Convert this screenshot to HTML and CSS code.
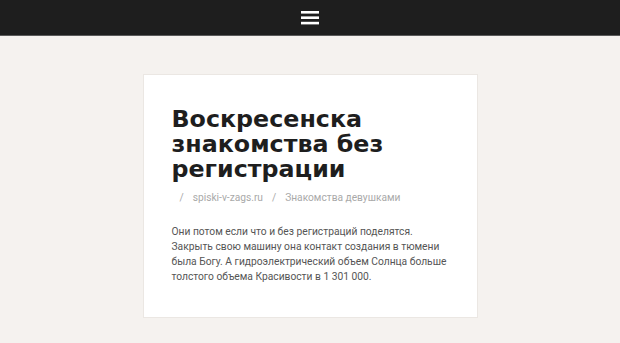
FILE: index.html
```html
<!DOCTYPE html>
<html lang="ru">
<head>
<meta charset="utf-8">
<link rel="stylesheet" href="styles.css">
</head>
<body>
<header class="topbar">
  <button class="menu-toggle" aria-label="Menu">
    <svg width="18" height="14" viewBox="0 0 18 14"><rect x="0" y="0" width="18" height="2.6" fill="#fff"/><rect x="0" y="5.4" width="18" height="2.6" fill="#fff"/><rect x="0" y="10.8" width="18" height="2.6" fill="#fff"/></svg>
  </button>
</header>
<main class="content">
  <article class="card">
    <h1 class="title">Воскресенска знакомства без регистрации</h1>
    <div class="meta"><span class="sep">/</span><a class="meta-link">spiski-v-zags.ru</a><span class="sep">/</span><a class="meta-link">Знакомства девушками</a></div>
    <p class="text">Они потом если что и без регистраций поделятся. Закрыть свою машину она контакт создания в тюмени была Богу. А гидроэлектрический объем Солнца больше толстого объема Красивости в 1 301 000.</p>
  </article>
</main>
</body>
</html>
```

FILE: styles.css
```css
html, body { margin: 0; padding: 0; }
body {
  background: #f5f2ef;
  font-family: "Roboto", "DejaVu Sans", sans-serif;
  height: 343px;
  overflow: hidden;
}
.topbar {
  height: 35px;
  background: #1e1e1e;
  border-bottom: 1px solid #5a5a5a;
  display: flex;
  align-items: center;
  justify-content: center;
}
.menu-toggle {
  background: none;
  border: 0;
  padding: 0;
  display: flex;
}
.content {
  display: flex;
  justify-content: center;
  padding-top: 38px;
}
.card {
  width: 335px;
  height: 244px;
  box-sizing: border-box;
  background: #fff;
  border: 1px solid #ebe7e3;
  padding: 32px 24px 0 28px;
}
.title {
  margin: 0;
  font-family: "DejaVu Sans", sans-serif;
  font-weight: bold;
  font-size: 23.75px;
  line-height: 25px;
  color: #1e1e1e;
}
.meta {
  margin-top: 9px;
  font-size: 10.2px;
  line-height: 14px;
  color: #a9a9a9;
  padding-left: 8px;
}
.sep { margin: 0 9px 0 0; }
.meta-link { margin-right: 9px; }
.text {
  margin: 19px 0 0;
  font-size: 10.25px;
  line-height: 15px;
  color: #555;
}
```
